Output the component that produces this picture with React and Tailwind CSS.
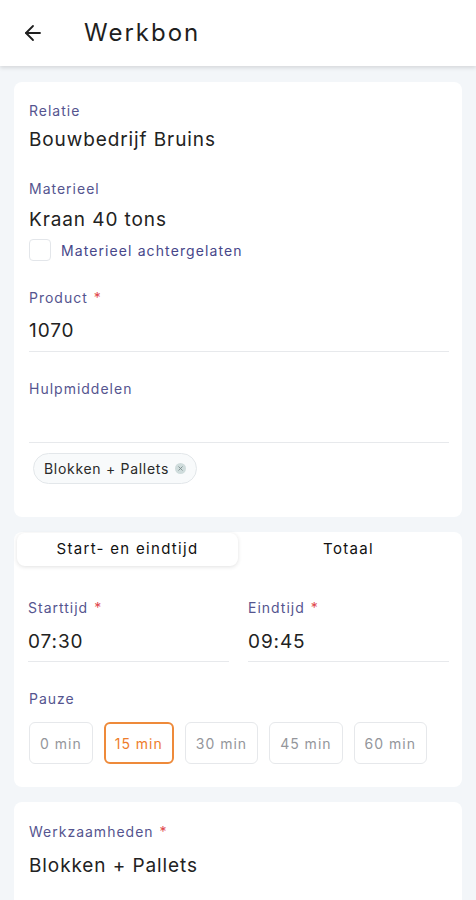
import { ArrowLeft, X } from 'lucide-react';

const pauzes = ['0 min', '15 min', '30 min', '45 min', '60 min'];

function Label({ children, required }) {
  return (
    <div className="text-[14px] leading-5 tracking-[1px] text-[#55558f]">
      {children}
      {required && <span className="ml-1.5 text-[#e0474c]">*</span>}
    </div>
  );
}

function Value({ children, className = '' }) {
  return <div className={`text-[19px] leading-7 tracking-[0.9px] text-[#222] ${className}`}>{children}</div>;
}

export default function App() {
  return (
    <div className="min-h-[900px] bg-[#f3f6f9] font-['Inter',sans-serif] text-[#1f1f1f]">
      {/* header */}
      <header className="flex h-[66px] items-center bg-white shadow-[0_2px_4px_rgba(0,0,0,0.12)]">
        <ArrowLeft className="ml-[21px] h-6 w-6 text-[#1f1f1f]" strokeWidth={1.8} />
        <h1 className="ml-[39px] text-[24px] font-normal tracking-[2px]">Werkbon</h1>
      </header>

      <div className="flex flex-col gap-[15px] px-[14px] pt-[16px]">
        {/* card 1 */}
        <section className="rounded-lg bg-white pl-[15px] pr-[13px] pt-[19px] pb-[33px]">
          <Label>Relatie</Label>
          <Value className="mt-[5px]">Bouwbedrijf Bruins</Value>

          <div className="mt-[25px]">
            <Label>Materieel</Label>
          </div>
          <Value className="mt-[7px]">Kraan 40 tons</Value>
          <div className="mt-[5px] flex items-center gap-[10px]">
            <div className="h-[22px] w-[22px] rounded-[4px] border border-[#e3e6ea]" />
            <span className="text-[14px] tracking-[1.1px] text-[#47478a]">Materieel achtergelaten</span>
          </div>

          <div className="mt-[27px]">
            <Label required>Product</Label>
          </div>
          <Value className="mt-[9px] border-b border-[#e7e9ec] pb-[6px]">1070</Value>

          <div className="mt-[27px]">
            <Label>Hulpmiddelen</Label>
          </div>
          <div className="h-[44px] border-b border-[#e7e9ec]" />
          <div className="mt-[10px] flex">
            <div className="ml-[4px] flex h-[31px] items-center gap-[6px] rounded-full border border-[#e3e7ea] bg-[#f8fafb] pl-[10px] pr-[10px]">
              <span className="text-[14px] tracking-[0.7px] text-[#2a2a2a]">Blokken + Pallets</span>
              <span className="flex h-[11px] w-[11px] items-center justify-center rounded-full bg-[#cfdcdc]">
                <X className="h-[7px] w-[7px] text-[#7a8a8a]" strokeWidth={3} />
              </span>
            </div>
          </div>
        </section>

        {/* card 2 */}
        <section className="rounded-lg bg-white pb-[23px]">
          <div className="grid grid-cols-2 px-[3px] pt-[1px]">
            <button className="flex h-[33px] items-center justify-center rounded-lg bg-white text-[15px] tracking-[1.3px] text-[#111] shadow-[0_1px_4px_rgba(0,0,0,0.12)]">
              Start- en eindtijd
            </button>
            <button className="flex h-[33px] items-center justify-center text-[15px] tracking-[1.3px] text-[#111]">
              Totaal
            </button>
          </div>

          <div className="mt-[32px] grid grid-cols-2 gap-[19px] pl-[14px] pr-[13px]">
            <div>
              <Label required>Starttijd</Label>
              <Value className="mt-[10px] border-b border-[#e7e9ec] pb-[5px]">07:30</Value>
            </div>
            <div>
              <Label required>Eindtijd</Label>
              <Value className="mt-[10px] border-b border-[#e7e9ec] pb-[5px]">09:45</Value>
            </div>
          </div>

          <div className="mt-[27px] px-[15px]">
            <Label>Pauze</Label>
            <div className="mt-[13px] flex gap-[11px]">
              {pauzes.map((p) => (
                <div
                  key={p}
                  className={
                    p === '15 min'
                      ? 'flex h-[42px] items-center justify-center rounded-md border-2 border-[#ee8a3a] px-[9px] text-[14px] tracking-[1px] text-[#ee7d2b]'
                      : 'flex h-[42px] items-center justify-center rounded-md border border-[#e6e8eb] px-[10px] text-[14px] tracking-[1px] text-[#94969b]'
                  }
                >
                  {p}
                </div>
              ))}
            </div>
          </div>
        </section>

        {/* card 3 */}
        <section className="rounded-lg bg-white px-[15px] pt-[20px] pb-[40px]">
          <Label required>Werkzaamheden</Label>
          <Value className="mt-[10px]">Blokken + Pallets</Value>
        </section>
      </div>
    </div>
  );
}
